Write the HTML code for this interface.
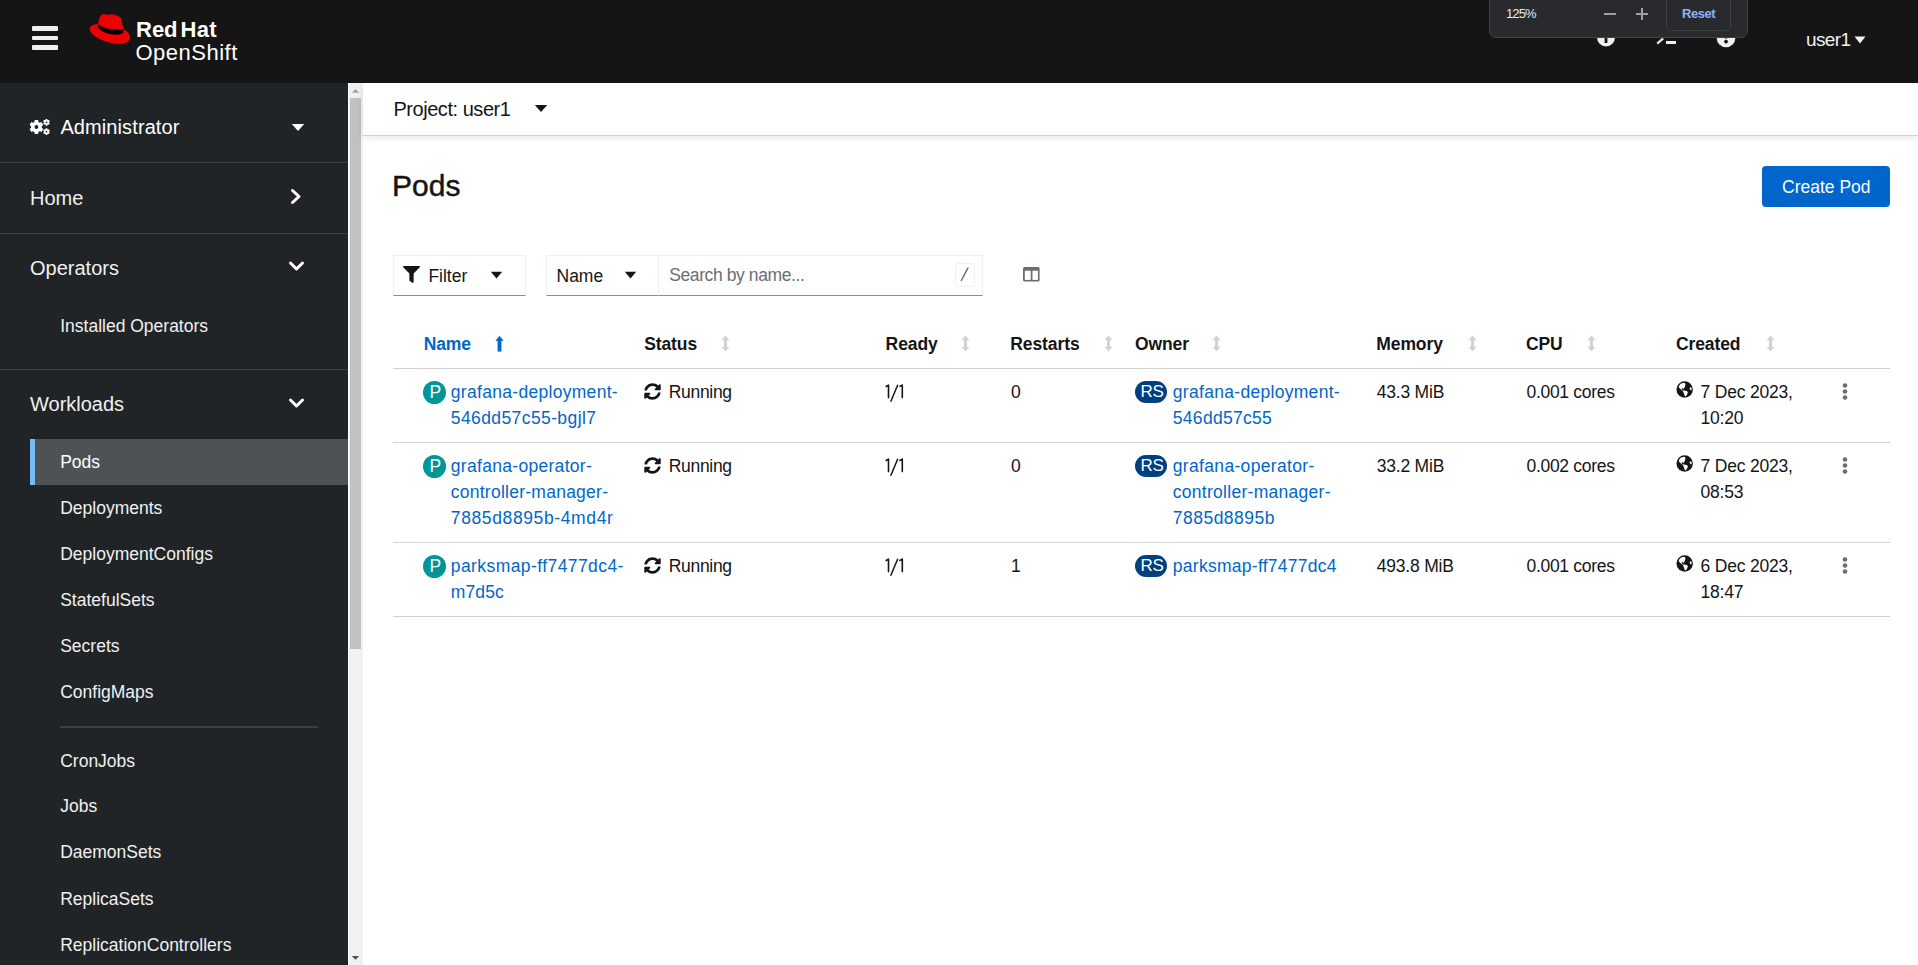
<!DOCTYPE html>
<html><head><meta charset="utf-8"><title>Pods · OpenShift</title>
<style>
html,body{margin:0;padding:0;}
body{width:1918px;height:965px;overflow:hidden;position:relative;background:#fff;font-family:"Liberation Sans", sans-serif;}
.t{position:absolute;white-space:nowrap;}
.r{position:absolute;display:block;}
</style></head><body>

<div class="r" style="left:0px;top:0px;width:1918px;height:83px;background:#151515;"></div>
<div class="r" style="left:32px;top:26.4px;width:26px;height:4.5px;background:#f0f0f0;border-radius:1px;"></div>
<div class="r" style="left:32px;top:35.8px;width:26px;height:4.5px;background:#f0f0f0;border-radius:1px;"></div>
<div class="r" style="left:32px;top:45px;width:26px;height:4.5px;background:#f0f0f0;border-radius:1px;"></div>
<svg class="r" style="left:80px;top:5px;" width="60" height="45" viewBox="0 0 1287 965"><path fill="#e00" d="M210 520C200 440 300 410 385 405C400 330 420 240 470 205C530 185 580 230 620 205C680 180 820 230 870 270C900 330 910 420 935 520C1010 560 1080 620 1075 700C1060 800 950 840 820 835C600 830 220 680 210 520Z"/><path fill="#000" d="M388 402C470 480 640 550 935 520L930 590C880 650 700 650 560 600C480 570 420 530 395 490Z"/></svg>
<div class="t" style="left:136px;top:15.00px;font-size:22px;line-height:29px;color:#fff;font-weight:700;">Red</div>
<div class="t" style="left:180.5px;top:15.00px;font-size:22px;line-height:29px;color:#fff;font-weight:700;letter-spacing:0.3px;">Hat</div>
<div class="t" style="left:135.5px;top:37.70px;font-size:22px;line-height:29px;color:#fff;letter-spacing:0.5px;">OpenShift</div>
<svg class="r" style="left:1596px;top:28px;" width="20" height="20" viewBox="0 0 20 20"><circle cx="10" cy="9.5" r="9" fill="#f0f0f0"/><rect x="8.6" y="4" width="2.8" height="11" fill="#151515"/></svg>
<svg class="r" style="left:1655px;top:28px;" width="22" height="18" viewBox="0 0 22 18"><path d="M2.2 15.6 L8.2 10.4" stroke="#e8e8e8" stroke-width="2.2" fill="none"/><rect x="11" y="13" width="10" height="3" fill="#f0f0f0"/></svg>
<svg class="r" style="left:1716px;top:28px;" width="20" height="20" viewBox="0 0 20 20"><circle cx="10" cy="10" r="9.3" fill="#f0f0f0"/><circle cx="10" cy="13.6" r="1.9" fill="#151515"/><rect x="8.9" y="8" width="2.2" height="2.6" fill="#151515"/></svg>
<div class="t" style="left:1806px;top:27.00px;font-size:19px;line-height:25px;color:#f0f0f0;letter-spacing:-0.6px;">user1</div>
<svg class="r" style="left:1854px;top:36px;" width="12" height="8" viewBox="0 0 12 8"><path d="M0.5 0.5H11.5L6 7.5Z" fill="#f0f0f0"/></svg>
<div class="r" style="left:1489px;top:-6px;width:257px;height:42px;background:#292a2d;border:1px solid #3f4246;border-radius:7px;"></div>
<div class="t" style="left:1506px;top:5.20px;font-size:13px;line-height:17px;color:#e8eaed;letter-spacing:-0.9px;">125%</div>
<div class="r" style="left:1604px;top:13px;width:12px;height:1.6px;background:#9aa0a6;"></div>
<div class="r" style="left:1636px;top:13px;width:12px;height:1.6px;background:#9aa0a6;"></div>
<div class="r" style="left:1641.2px;top:7.8px;width:1.6px;height:12px;background:#9aa0a6;"></div>
<div class="r" style="left:1666px;top:-6px;width:63px;height:35px;border:1px solid #3c4043;border-radius:5px;"></div>
<div class="t" style="left:1682px;top:5.20px;font-size:13px;line-height:17px;color:#8ab4f8;font-weight:700;letter-spacing:-0.45px;">Reset</div>
<div class="r" style="left:0px;top:83px;width:348px;height:882px;background:#212427;"></div>
<svg class="r" style="left:20px;top:105px;" width="50" height="40" viewBox="0 0 50 40"><path fill="#fff" fill-rule="evenodd" d="M18.42 16.99L18.12 15.11L14.68 15.11L14.38 16.99L13.92 17.20L13.49 17.45L13.08 17.74L11.29 17.07L9.58 20.04L11.05 21.25L11.01 21.75L11.01 22.25L11.05 22.75L9.58 23.96L11.29 26.93L13.08 26.26L13.49 26.55L13.92 26.80L14.38 27.01L14.68 28.89L18.12 28.89L18.42 27.01L18.88 26.80L19.31 26.55L19.72 26.26L21.51 26.93L23.22 23.96L21.75 22.75L21.79 22.25L21.79 21.75L21.75 21.25L23.22 20.04L21.51 17.07L19.72 17.74L19.31 17.45L18.88 17.20ZM18.30 22.00A1.9 1.9 0 1 0 14.50 22.00A1.9 1.9 0 1 0 18.30 22.00ZM27.47 14.89L27.35 13.90L25.65 13.90L25.53 14.89L25.31 14.99L25.10 15.11L24.90 15.25L23.98 14.87L23.14 16.34L23.93 16.94L23.90 17.18L23.90 17.42L23.93 17.66L23.14 18.26L23.98 19.73L24.90 19.35L25.10 19.49L25.31 19.61L25.53 19.71L25.65 20.70L27.35 20.70L27.47 19.71L27.69 19.61L27.90 19.49L28.10 19.35L29.02 19.73L29.86 18.26L29.07 17.66L29.10 17.42L29.10 17.18L29.07 16.94L29.86 16.34L29.02 14.87L28.10 15.25L27.90 15.11L27.69 14.99ZM27.40 17.30A0.9 0.9 0 1 0 25.60 17.30A0.9 0.9 0 1 0 27.40 17.30ZM27.47 24.19L27.35 23.20L25.65 23.20L25.53 24.19L25.31 24.29L25.10 24.41L24.90 24.55L23.98 24.17L23.14 25.64L23.93 26.24L23.90 26.48L23.90 26.72L23.93 26.96L23.14 27.56L23.98 29.03L24.90 28.65L25.10 28.79L25.31 28.91L25.53 29.01L25.65 30.00L27.35 30.00L27.47 29.01L27.69 28.91L27.90 28.79L28.10 28.65L29.02 29.03L29.86 27.56L29.07 26.96L29.10 26.72L29.10 26.48L29.07 26.24L29.86 25.64L29.02 24.17L28.10 24.55L27.90 24.41L27.69 24.29ZM27.40 26.60A0.9 0.9 0 1 0 25.60 26.60A0.9 0.9 0 1 0 27.40 26.60Z"/></svg>
<div class="t" style="left:60.4px;top:114.40px;font-size:20px;line-height:26px;color:#fff;letter-spacing:0.1px;">Administrator</div>
<svg class="r" style="left:291px;top:123px;" width="14" height="9" viewBox="0 0 14 9"><path d="M0.8 1H13.2L7 8Z" fill="#fff"/></svg>
<div class="r" style="left:0px;top:162px;width:348px;height:1px;background:#3c3f42;"></div>
<div class="t" style="left:30px;top:185.00px;font-size:20px;line-height:26px;color:#f0f0f0;">Home</div>
<svg class="r" style="left:289px;top:188px;" width="14" height="17" viewBox="0 0 14 17"><path d="M3.5 2.5L10 8.5L3.5 14.5" fill="none" stroke="#fff" stroke-width="3" stroke-linecap="round" stroke-linejoin="round"/></svg>
<div class="r" style="left:0px;top:233px;width:348px;height:1px;background:#3c3f42;"></div>
<div class="t" style="left:30px;top:254.80px;font-size:20px;line-height:26px;color:#f0f0f0;">Operators</div>
<svg class="r" style="left:288px;top:259px;" width="17" height="14" viewBox="0 0 17 14"><path d="M2.5 4L8.5 10L14.5 4" fill="none" stroke="#fff" stroke-width="3" stroke-linecap="round" stroke-linejoin="round"/></svg>
<div class="t" style="left:60.2px;top:314.50px;font-size:17.5px;line-height:23px;color:#f0f0f0;">Installed Operators</div>
<div class="r" style="left:0px;top:369px;width:348px;height:1px;background:#3c3f42;"></div>
<div class="t" style="left:30px;top:391.40px;font-size:20px;line-height:26px;color:#f0f0f0;">Workloads</div>
<svg class="r" style="left:288px;top:396px;" width="17" height="14" viewBox="0 0 17 14"><path d="M2.5 4L8.5 10L14.5 4" fill="none" stroke="#fff" stroke-width="3" stroke-linecap="round" stroke-linejoin="round"/></svg>
<div class="r" style="left:30px;top:439px;width:318px;height:46px;background:#4f5255;"></div>
<div class="r" style="left:30px;top:439px;width:5px;height:46px;background:#73bcf7;"></div>
<div class="t" style="left:60.2px;top:450.50px;font-size:17.5px;line-height:23px;color:#fff;">Pods</div>
<div class="t" style="left:60.2px;top:496.50px;font-size:17.5px;line-height:23px;color:#f0f0f0;">Deployments</div>
<div class="t" style="left:60.2px;top:542.50px;font-size:17.5px;line-height:23px;color:#f0f0f0;">DeploymentConfigs</div>
<div class="t" style="left:60.2px;top:589.30px;font-size:17.5px;line-height:23px;color:#f0f0f0;">StatefulSets</div>
<div class="t" style="left:60.2px;top:635.30px;font-size:17.5px;line-height:23px;color:#f0f0f0;">Secrets</div>
<div class="t" style="left:60.2px;top:681.20px;font-size:17.5px;line-height:23px;color:#f0f0f0;">ConfigMaps</div>
<div class="t" style="left:60.2px;top:749.60px;font-size:17.5px;line-height:23px;color:#f0f0f0;">CronJobs</div>
<div class="t" style="left:60.2px;top:795.40px;font-size:17.5px;line-height:23px;color:#f0f0f0;">Jobs</div>
<div class="t" style="left:60.2px;top:841.20px;font-size:17.5px;line-height:23px;color:#f0f0f0;">DaemonSets</div>
<div class="t" style="left:60.2px;top:887.50px;font-size:17.5px;line-height:23px;color:#f0f0f0;">ReplicaSets</div>
<div class="t" style="left:60.2px;top:934.20px;font-size:17.5px;line-height:23px;color:#f0f0f0;">ReplicationControllers</div>
<div class="r" style="left:60px;top:726px;width:258px;height:2px;background:#3c3f42;"></div>
<div class="r" style="left:348px;top:83px;width:1px;height:882px;background:#fff;"></div>
<div class="r" style="left:349px;top:83px;width:14px;height:882px;background:#f1f1f1;"></div>
<div class="r" style="left:350px;top:98px;width:11px;height:551px;background:#c1c1c1;"></div>
<svg class="r" style="left:351px;top:87px;" width="9" height="7" viewBox="0 0 9 7"><path d="M0.8 5.8H8.2L4.5 2Z" fill="#a3a3a3"/></svg>
<svg class="r" style="left:351px;top:954px;" width="9" height="7" viewBox="0 0 9 7"><path d="M0.8 2H8.2L4.5 5.8Z" fill="#505050"/></svg>
<div class="r" style="left:363px;top:83px;width:1555px;height:52px;background:#fff;box-shadow:0 1px 0 #d0d0d0, 0 3px 7px rgba(3,3,3,0.10);"></div>
<div class="t" style="left:393.4px;top:96.00px;font-size:20px;line-height:26px;color:#151515;letter-spacing:-0.45px;">Project: user1</div>
<svg class="r" style="left:534px;top:104px;" width="14" height="9" viewBox="0 0 14 9"><path d="M0.8 1H13.2L7 8Z" fill="#151515"/></svg>
<div class="t" style="left:392px;top:166.00px;font-size:30px;line-height:39px;color:#151515;-webkit-text-stroke:0.45px #151515;">Pods</div>
<div class="r" style="left:1762px;top:166px;width:128px;height:41px;background:#06c;border-radius:4px;"></div>
<div class="t" style="left:1782px;top:176.10px;font-size:17.5px;line-height:23px;color:#fff;">Create Pod</div>
<div class="r" style="left:393px;top:255px;width:131px;height:39px;border:1px solid #f0f0f0;border-bottom:1px solid #8a8d90;"></div>
<svg class="r" style="left:403px;top:266px;" width="17" height="17" viewBox="0 0 512 512"><path fill="#151515" d="M487.976 0H24.028C2.71 0-8.047 25.866 7.058 40.971L192 225.941V432c0 7.831 3.821 15.17 10.237 19.662l80 55.98C298.02 518.69 320 507.493 320 487.98V225.941l184.947-184.97C520.021 25.896 509.338 0 487.976 0z"/></svg>
<div class="t" style="left:428.4px;top:264.70px;font-size:17.5px;line-height:23px;color:#151515;">Filter</div>
<svg class="r" style="left:490px;top:271px;" width="13" height="8" viewBox="0 0 13 8"><path d="M0.8 0.8H12.2L6.5 7.5Z" fill="#151515"/></svg>
<div class="r" style="left:546px;top:255px;width:111px;height:39px;border:1px solid #f0f0f0;border-bottom:1px solid #8a8d90;border-right:none;"></div>
<div class="t" style="left:556.5px;top:264.70px;font-size:17.5px;line-height:23px;color:#151515;">Name</div>
<svg class="r" style="left:624px;top:271px;" width="13" height="8" viewBox="0 0 13 8"><path d="M0.8 0.8H12.2L6.5 7.5Z" fill="#151515"/></svg>
<div class="r" style="left:658px;top:255px;width:323px;height:39px;border:1px solid #f0f0f0;border-bottom:1px solid #8a8d90;"></div>
<div class="t" style="left:669.2px;top:264.30px;font-size:17.5px;line-height:23px;color:#6a6e73;letter-spacing:-0.4px;">Search by name...</div>
<div class="r" style="left:955px;top:263px;width:18px;height:22px;border:1px solid #f0f0f0;border-radius:3px;"></div>
<svg class="r" style="left:955px;top:263px;" width="20" height="23" viewBox="0 0 20 23"><path d="M12.9 5.2L6.3 17.5" stroke="#6a6e73" stroke-width="1.5" stroke-linecap="round"/></svg>
<svg class="r" style="left:1023.3px;top:267.3px;" width="17" height="15" viewBox="0 0 17 15"><rect x="0" y="0" width="16.6" height="14.6" rx="1.6" fill="#6a6e73"/><rect x="1.8" y="3.7" width="5.9" height="9.2" fill="#fff"/><rect x="9.5" y="3.7" width="5.4" height="9.2" fill="#fff"/></svg>
<div class="t" style="left:423.7px;top:332.50px;font-size:17.5px;line-height:23px;color:#06c;font-weight:700;letter-spacing:-0.1px;">Name</div>
<svg class="r" style="left:494px;top:335px;" width="11" height="17" viewBox="0 0 11 17"><path d="M5.5 1.2L9.1 5.6H7.1V16.3H3.9V5.6H1.9Z" fill="#06c" stroke="#06c" stroke-width="0.6" stroke-linejoin="round"/></svg>
<div class="t" style="left:644.2px;top:332.50px;font-size:17.5px;line-height:23px;color:#151515;font-weight:700;letter-spacing:-0.1px;">Status</div>
<svg class="r" style="left:721.4px;top:335px;" width="9" height="17" viewBox="0 0 9 17"><path d="M4.5 0.6L8.6 5.2H6V11.8H8.6L4.5 16.4L0.4 11.8H3V5.2H0.4Z" fill="#d2d2d2"/></svg>
<div class="t" style="left:885.6px;top:332.50px;font-size:17.5px;line-height:23px;color:#151515;font-weight:700;letter-spacing:-0.1px;">Ready</div>
<svg class="r" style="left:960.8px;top:335px;" width="9" height="17" viewBox="0 0 9 17"><path d="M4.5 0.6L8.6 5.2H6V11.8H8.6L4.5 16.4L0.4 11.8H3V5.2H0.4Z" fill="#d2d2d2"/></svg>
<div class="t" style="left:1010.3px;top:332.50px;font-size:17.5px;line-height:23px;color:#151515;font-weight:700;letter-spacing:-0.1px;">Restarts</div>
<svg class="r" style="left:1103.8px;top:335px;" width="9" height="17" viewBox="0 0 9 17"><path d="M4.5 0.6L8.6 5.2H6V11.8H8.6L4.5 16.4L0.4 11.8H3V5.2H0.4Z" fill="#d2d2d2"/></svg>
<div class="t" style="left:1135px;top:332.50px;font-size:17.5px;line-height:23px;color:#151515;font-weight:700;letter-spacing:-0.1px;">Owner</div>
<svg class="r" style="left:1212.4px;top:335px;" width="9" height="17" viewBox="0 0 9 17"><path d="M4.5 0.6L8.6 5.2H6V11.8H8.6L4.5 16.4L0.4 11.8H3V5.2H0.4Z" fill="#d2d2d2"/></svg>
<div class="t" style="left:1376.3px;top:332.50px;font-size:17.5px;line-height:23px;color:#151515;font-weight:700;letter-spacing:-0.1px;">Memory</div>
<svg class="r" style="left:1468.2px;top:335px;" width="9" height="17" viewBox="0 0 9 17"><path d="M4.5 0.6L8.6 5.2H6V11.8H8.6L4.5 16.4L0.4 11.8H3V5.2H0.4Z" fill="#d2d2d2"/></svg>
<div class="t" style="left:1526px;top:332.50px;font-size:17.5px;line-height:23px;color:#151515;font-weight:700;letter-spacing:-0.1px;">CPU</div>
<svg class="r" style="left:1587.2px;top:335px;" width="9" height="17" viewBox="0 0 9 17"><path d="M4.5 0.6L8.6 5.2H6V11.8H8.6L4.5 16.4L0.4 11.8H3V5.2H0.4Z" fill="#d2d2d2"/></svg>
<div class="t" style="left:1675.9px;top:332.50px;font-size:17.5px;line-height:23px;color:#151515;font-weight:700;letter-spacing:-0.1px;">Created</div>
<svg class="r" style="left:1766px;top:335px;" width="9" height="17" viewBox="0 0 9 17"><path d="M4.5 0.6L8.6 5.2H6V11.8H8.6L4.5 16.4L0.4 11.8H3V5.2H0.4Z" fill="#d2d2d2"/></svg>
<div class="r" style="left:393px;top:368px;width:1497px;height:1px;background:#d2d2d2;"></div>
<div class="r" style="left:393px;top:442px;width:1497px;height:1px;background:#d2d2d2;"></div>
<div class="r" style="left:393px;top:542px;width:1497px;height:1px;background:#d2d2d2;"></div>
<div class="r" style="left:393px;top:616px;width:1497px;height:1px;background:#d2d2d2;"></div>
<div class="r" style="left:423px;top:381px;width:23px;height:23px;border-radius:50%;background:#009596;"></div>
<div class="t" style="left:429.6px;top:380.50px;font-size:17.5px;line-height:23px;color:#fff;">P</div>
<div class="t" style="left:450.8px;top:379.00px;font-size:17.5px;line-height:26px;color:#06c;"><span style="letter-spacing:0.3px">grafana-deployment-</span><br><span style="letter-spacing:0.4px">546dd57c55-bgjl7</span></div>
<svg class="r" style="left:644px;top:383px;" width="17" height="17" viewBox="0 0 512 512"><path fill="#151515" d="M370.72 133.28C339.458 104.008 298.888 87.962 255.848 88c-77.458.068-144.328 53.178-162.791 126.85-1.344 5.363-6.122 9.15-11.651 9.15H24.103c-7.498 0-13.194-6.807-11.807-14.176C33.933 94.924 134.813 8 256 8c66.448 0 126.791 26.136 171.315 68.685L463.03 40.97C478.149 25.851 504 36.559 504 57.941V192c0 13.255-10.745 24-24 24H345.941c-21.382 0-32.09-25.851-16.971-40.971l41.75-41.749zM32 296h134.059c21.382 0 32.09 25.851 16.971 40.971l-41.75 41.75c31.262 29.273 71.835 45.319 114.876 45.28 77.418-.07 144.315-53.144 162.787-126.849 1.344-5.363 6.122-9.15 11.651-9.15h57.304c7.498 0 13.194 6.807 11.807 14.176C478.067 417.076 377.187 504 256 504c-66.448 0-126.791-26.136-171.315-68.685L48.97 471.03C33.851 486.149 8 475.441 8 454.059V320c0-13.255 10.745-24 24-24z"/></svg>
<div class="t" style="left:668.7px;top:380.50px;font-size:17.5px;line-height:23px;color:#151515;letter-spacing:-0.3px;">Running</div>
<svg class="r" style="left:880px;top:380px;" width="40" height="25" viewBox="0 0 40 25"><path d="M6.2 6.5L8.5 5.1V17.6M22.3 5.1V17.6M19.9 6.4L22.3 5.1" fill="none" stroke="#151515" stroke-width="1.6" stroke-linecap="round" stroke-linejoin="round"/><path d="M17.6 5.2L10.9 21.2" stroke="#151515" stroke-width="1.5" stroke-linecap="round"/></svg>
<div class="t" style="left:1011px;top:380.50px;font-size:17.5px;line-height:23px;color:#151515;">0</div>
<div class="r" style="left:1135px;top:381px;width:32px;height:22px;border-radius:11px;background:#004080;"></div>
<div class="t" style="left:1140.5px;top:380.80px;font-size:17px;line-height:22px;color:#fff;letter-spacing:-0.2px;">RS</div>
<div class="t" style="left:1172.8px;top:379.00px;font-size:17.5px;line-height:26px;color:#06c;"><span style="letter-spacing:0.3px">grafana-deployment-</span><br><span style="letter-spacing:0.3px">546dd57c55</span></div>
<div class="t" style="left:1376.7px;top:380.50px;font-size:17.5px;line-height:23px;color:#151515;letter-spacing:-0.2px;">43.3 MiB</div>
<div class="t" style="left:1526.5px;top:380.50px;font-size:17.5px;line-height:23px;color:#151515;letter-spacing:-0.3px;">0.001 cores</div>
<svg class="r" style="left:1676px;top:381px;" width="17" height="17" viewBox="0 0 17 17"><circle cx="8.67" cy="8.52" r="8.22" fill="#151515"/><path fill="#fff" transform="translate(0.45 0.3)" d="M2.43 4.58L4.18 2.43L7.14 1.48L8.49 1.75L9.03 3.23L8.36 5.39L7.68 7.01L6.87 7.68L5.8 6.74L5.12 7.28L5.93 8.89L10.38 9.7L11.46 11.05L10.65 13.21L9.3 15.09L8.22 14.56L7.41 11.86L6.6 9.97L5.8 9.3L3.64 7.55L2.29 6.06Z"/><path fill="#fff" transform="translate(0.45 0.3)" d="M13.07 7.55L14.15 5.66L14.96 6.47L15.23 8.36L14.42 9.16Z"/></svg>
<div class="t" style="left:1700.5px;top:379.00px;font-size:17.5px;line-height:26px;color:#151515;"><span style="letter-spacing:-0.2px">7 Dec 2023,</span><br><span style="letter-spacing:-0.2px">10:20</span></div>
<svg class="r" style="left:1841px;top:383px;" width="8" height="18" viewBox="0 0 8 18"><circle cx="4" cy="2.5" r="2.3" fill="#6a6e73"/><circle cx="4" cy="8.5" r="2.3" fill="#6a6e73"/><circle cx="4" cy="14.5" r="2.3" fill="#6a6e73"/></svg>
<div class="r" style="left:423px;top:455px;width:23px;height:23px;border-radius:50%;background:#009596;"></div>
<div class="t" style="left:429.6px;top:454.50px;font-size:17.5px;line-height:23px;color:#fff;">P</div>
<div class="t" style="left:450.8px;top:453.00px;font-size:17.5px;line-height:26px;color:#06c;"><span style="letter-spacing:0.3px">grafana-operator-</span><br><span style="letter-spacing:0.25px">controller-manager-</span><br><span style="letter-spacing:0.62px">7885d8895b-4md4r</span></div>
<svg class="r" style="left:644px;top:457px;" width="17" height="17" viewBox="0 0 512 512"><path fill="#151515" d="M370.72 133.28C339.458 104.008 298.888 87.962 255.848 88c-77.458.068-144.328 53.178-162.791 126.85-1.344 5.363-6.122 9.15-11.651 9.15H24.103c-7.498 0-13.194-6.807-11.807-14.176C33.933 94.924 134.813 8 256 8c66.448 0 126.791 26.136 171.315 68.685L463.03 40.97C478.149 25.851 504 36.559 504 57.941V192c0 13.255-10.745 24-24 24H345.941c-21.382 0-32.09-25.851-16.971-40.971l41.75-41.749zM32 296h134.059c21.382 0 32.09 25.851 16.971 40.971l-41.75 41.75c31.262 29.273 71.835 45.319 114.876 45.28 77.418-.07 144.315-53.144 162.787-126.849 1.344-5.363 6.122-9.15 11.651-9.15h57.304c7.498 0 13.194 6.807 11.807 14.176C478.067 417.076 377.187 504 256 504c-66.448 0-126.791-26.136-171.315-68.685L48.97 471.03C33.851 486.149 8 475.441 8 454.059V320c0-13.255 10.745-24 24-24z"/></svg>
<div class="t" style="left:668.7px;top:454.50px;font-size:17.5px;line-height:23px;color:#151515;letter-spacing:-0.3px;">Running</div>
<svg class="r" style="left:880px;top:454px;" width="40" height="25" viewBox="0 0 40 25"><path d="M6.2 6.5L8.5 5.1V17.6M22.3 5.1V17.6M19.9 6.4L22.3 5.1" fill="none" stroke="#151515" stroke-width="1.6" stroke-linecap="round" stroke-linejoin="round"/><path d="M17.6 5.2L10.9 21.2" stroke="#151515" stroke-width="1.5" stroke-linecap="round"/></svg>
<div class="t" style="left:1011px;top:454.50px;font-size:17.5px;line-height:23px;color:#151515;">0</div>
<div class="r" style="left:1135px;top:455px;width:32px;height:22px;border-radius:11px;background:#004080;"></div>
<div class="t" style="left:1140.5px;top:454.80px;font-size:17px;line-height:22px;color:#fff;letter-spacing:-0.2px;">RS</div>
<div class="t" style="left:1172.8px;top:453.00px;font-size:17.5px;line-height:26px;color:#06c;"><span style="letter-spacing:0.33px">grafana-operator-</span><br><span style="letter-spacing:0.28px">controller-manager-</span><br><span style="letter-spacing:0.48px">7885d8895b</span></div>
<div class="t" style="left:1376.7px;top:454.50px;font-size:17.5px;line-height:23px;color:#151515;letter-spacing:-0.2px;">33.2 MiB</div>
<div class="t" style="left:1526.5px;top:454.50px;font-size:17.5px;line-height:23px;color:#151515;letter-spacing:-0.3px;">0.002 cores</div>
<svg class="r" style="left:1676px;top:455px;" width="17" height="17" viewBox="0 0 17 17"><circle cx="8.67" cy="8.52" r="8.22" fill="#151515"/><path fill="#fff" transform="translate(0.45 0.3)" d="M2.43 4.58L4.18 2.43L7.14 1.48L8.49 1.75L9.03 3.23L8.36 5.39L7.68 7.01L6.87 7.68L5.8 6.74L5.12 7.28L5.93 8.89L10.38 9.7L11.46 11.05L10.65 13.21L9.3 15.09L8.22 14.56L7.41 11.86L6.6 9.97L5.8 9.3L3.64 7.55L2.29 6.06Z"/><path fill="#fff" transform="translate(0.45 0.3)" d="M13.07 7.55L14.15 5.66L14.96 6.47L15.23 8.36L14.42 9.16Z"/></svg>
<div class="t" style="left:1700.5px;top:453.00px;font-size:17.5px;line-height:26px;color:#151515;"><span style="letter-spacing:-0.2px">7 Dec 2023,</span><br><span style="letter-spacing:-0.2px">08:53</span></div>
<svg class="r" style="left:1841px;top:457px;" width="8" height="18" viewBox="0 0 8 18"><circle cx="4" cy="2.5" r="2.3" fill="#6a6e73"/><circle cx="4" cy="8.5" r="2.3" fill="#6a6e73"/><circle cx="4" cy="14.5" r="2.3" fill="#6a6e73"/></svg>
<div class="r" style="left:423px;top:555px;width:23px;height:23px;border-radius:50%;background:#009596;"></div>
<div class="t" style="left:429.6px;top:554.50px;font-size:17.5px;line-height:23px;color:#fff;">P</div>
<div class="t" style="left:450.8px;top:553.00px;font-size:17.5px;line-height:26px;color:#06c;"><span style="letter-spacing:0.42px">parksmap-ff7477dc4-</span><br><span style="letter-spacing:0.1px">m7d5c</span></div>
<svg class="r" style="left:644px;top:557px;" width="17" height="17" viewBox="0 0 512 512"><path fill="#151515" d="M370.72 133.28C339.458 104.008 298.888 87.962 255.848 88c-77.458.068-144.328 53.178-162.791 126.85-1.344 5.363-6.122 9.15-11.651 9.15H24.103c-7.498 0-13.194-6.807-11.807-14.176C33.933 94.924 134.813 8 256 8c66.448 0 126.791 26.136 171.315 68.685L463.03 40.97C478.149 25.851 504 36.559 504 57.941V192c0 13.255-10.745 24-24 24H345.941c-21.382 0-32.09-25.851-16.971-40.971l41.75-41.749zM32 296h134.059c21.382 0 32.09 25.851 16.971 40.971l-41.75 41.75c31.262 29.273 71.835 45.319 114.876 45.28 77.418-.07 144.315-53.144 162.787-126.849 1.344-5.363 6.122-9.15 11.651-9.15h57.304c7.498 0 13.194 6.807 11.807 14.176C478.067 417.076 377.187 504 256 504c-66.448 0-126.791-26.136-171.315-68.685L48.97 471.03C33.851 486.149 8 475.441 8 454.059V320c0-13.255 10.745-24 24-24z"/></svg>
<div class="t" style="left:668.7px;top:554.50px;font-size:17.5px;line-height:23px;color:#151515;letter-spacing:-0.3px;">Running</div>
<svg class="r" style="left:880px;top:554px;" width="40" height="25" viewBox="0 0 40 25"><path d="M6.2 6.5L8.5 5.1V17.6M22.3 5.1V17.6M19.9 6.4L22.3 5.1" fill="none" stroke="#151515" stroke-width="1.6" stroke-linecap="round" stroke-linejoin="round"/><path d="M17.6 5.2L10.9 21.2" stroke="#151515" stroke-width="1.5" stroke-linecap="round"/></svg>
<div class="t" style="left:1011px;top:554.50px;font-size:17.5px;line-height:23px;color:#151515;">1</div>
<div class="r" style="left:1135px;top:555px;width:32px;height:22px;border-radius:11px;background:#004080;"></div>
<div class="t" style="left:1140.5px;top:554.80px;font-size:17px;line-height:22px;color:#fff;letter-spacing:-0.2px;">RS</div>
<div class="t" style="left:1172.8px;top:553.00px;font-size:17.5px;line-height:26px;color:#06c;"><span style="letter-spacing:0.27px">parksmap-ff7477dc4</span></div>
<div class="t" style="left:1376.7px;top:554.50px;font-size:17.5px;line-height:23px;color:#151515;letter-spacing:-0.2px;">493.8 MiB</div>
<div class="t" style="left:1526.5px;top:554.50px;font-size:17.5px;line-height:23px;color:#151515;letter-spacing:-0.3px;">0.001 cores</div>
<svg class="r" style="left:1676px;top:555px;" width="17" height="17" viewBox="0 0 17 17"><circle cx="8.67" cy="8.52" r="8.22" fill="#151515"/><path fill="#fff" transform="translate(0.45 0.3)" d="M2.43 4.58L4.18 2.43L7.14 1.48L8.49 1.75L9.03 3.23L8.36 5.39L7.68 7.01L6.87 7.68L5.8 6.74L5.12 7.28L5.93 8.89L10.38 9.7L11.46 11.05L10.65 13.21L9.3 15.09L8.22 14.56L7.41 11.86L6.6 9.97L5.8 9.3L3.64 7.55L2.29 6.06Z"/><path fill="#fff" transform="translate(0.45 0.3)" d="M13.07 7.55L14.15 5.66L14.96 6.47L15.23 8.36L14.42 9.16Z"/></svg>
<div class="t" style="left:1700.5px;top:553.00px;font-size:17.5px;line-height:26px;color:#151515;"><span style="letter-spacing:-0.2px">6 Dec 2023,</span><br><span style="letter-spacing:-0.2px">18:47</span></div>
<svg class="r" style="left:1841px;top:557px;" width="8" height="18" viewBox="0 0 8 18"><circle cx="4" cy="2.5" r="2.3" fill="#6a6e73"/><circle cx="4" cy="8.5" r="2.3" fill="#6a6e73"/><circle cx="4" cy="14.5" r="2.3" fill="#6a6e73"/></svg>
</body></html>
